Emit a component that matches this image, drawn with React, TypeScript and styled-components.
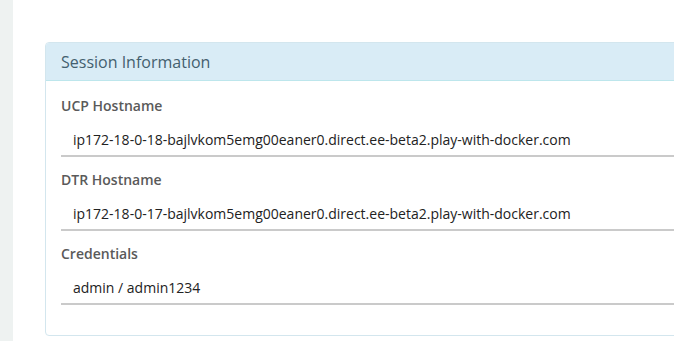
import { FC } from 'react';
import styled, { createGlobalStyle } from 'styled-components';

const GlobalStyle = createGlobalStyle`
  html, body {
    margin: 0;
    padding: 0;
    background: #ffffff;
    font-family: 'Open Sans', 'Liberation Sans', sans-serif;
  }
`;

const Page = styled.div`
  display: flex;
  min-height: 341px;
  overflow: hidden;
`;

const Sidebar = styled.div`
  flex: 0 0 13px;
  background-color: #eef2f1;
`;

const Main = styled.div`
  flex: 1 1 auto;
  padding: 42px 0 0 32px;
  overflow: hidden;
`;

const Panel = styled.div`
  width: 720px;
  border: 1px solid #d3e6ee;
  border-radius: 4px;
  background: #ffffff;
`;

const PanelHeading = styled.div`
  background-color: #d9ecf6;
  border-bottom: 1px solid #bde6ec;
  border-radius: 3px 3px 0 0;
  padding: 0 15px;
  height: 37px;
  display: flex;
  align-items: center;
  font-size: 16px;
  color: #44606f;
`;

const PanelBody = styled.div`
  padding: 16px 15px 15px;
  display: flex;
  flex-direction: column;
  gap: 14px;
`;

const Field = styled.div`
  display: flex;
  flex-direction: column;
  gap: 6px;

  &:last-child {
    margin-bottom: 15px;
  }
`;

const Label = styled.label`
  font-size: 14px;
  font-weight: 600;
  line-height: 18px;
  color: #5a5a5a;
`;

const Value = styled.div`
  padding: 9px 12px 5px;
  line-height: 20px;
  font-size: 14px;
  color: #222222;
  border-bottom: 2px solid #cacaca;
`;

const fields = [
  {
    label: 'UCP Hostname',
    value: 'ip172-18-0-18-bajlvkom5emg00eaner0.direct.ee-beta2.play-with-docker.com',
  },
  {
    label: 'DTR Hostname',
    value: 'ip172-18-0-17-bajlvkom5emg00eaner0.direct.ee-beta2.play-with-docker.com',
  },
  { label: 'Credentials', value: 'admin / admin1234' },
];

const App: FC = () => (
  <>
    <GlobalStyle />
    <Page>
      <Sidebar />
      <Main>
        <Panel>
          <PanelHeading>Session Information</PanelHeading>
          <PanelBody>
            {fields.map(f => (
              <Field key={f.label}>
                <Label>{f.label}</Label>
                <Value>{f.value}</Value>
              </Field>
            ))}
          </PanelBody>
        </Panel>
      </Main>
    </Page>
  </>
);

export default App;
